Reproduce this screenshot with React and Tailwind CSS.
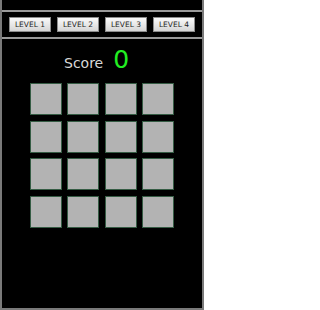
import React from "react";

const levels = ["LEVEL 1", "LEVEL 2", "LEVEL 3", "LEVEL 4"];
const tiles = Array.from({ length: 16 }, (_, i) => i);

const App = () => {
  return (
    <div
      className="w-[204px] h-[310px] bg-black border-l-2 border-r-2 border-b-2 border-[#7a7a7a] flex flex-col"
      style={{ fontFamily: '"DejaVu Sans", sans-serif' }}
    >
      {/* title strip */}
      <div className="h-[10px]" />
      <div className="h-[2px] bg-[#9a9a9a]" />

      {/* level buttons */}
      <div className="flex justify-between px-[7px] pt-[5px] pb-[5px]">
        {levels.map((l) => (
          <button
            key={l}
            className="w-[42px] h-[15px] border border-[#8c8c8c] bg-gradient-to-b from-[#fafafa] to-[#d6d6d6] text-[7.5px] leading-none text-[#222] flex items-center justify-center"
            style={{ fontFamily: '"DejaVu Sans", sans-serif' }}
          >
            {l}
          </button>
        ))}
      </div>
      <div className="h-[2px] bg-[#9a9a9a]" />

      {/* score */}
      <div className="flex items-baseline ml-[62px] mt-[8px] gap-[10px]">
        <span className="text-[14px] leading-none text-[#d8d8d8]">Score</span>
        <span className="text-[25px] leading-none text-[#22ee22]">0</span>
      </div>

      {/* board */}
      <div className="grid grid-cols-4 w-[144px] mx-auto mt-[11px] gap-x-[5.33px] gap-y-[5.67px]">
        {tiles.map((t) => (
          <div
            key={t}
            className="h-[32px] bg-[#b3b3b3] border border-[#355c44]"
          />
        ))}
      </div>
    </div>
  );
};

export default App;
